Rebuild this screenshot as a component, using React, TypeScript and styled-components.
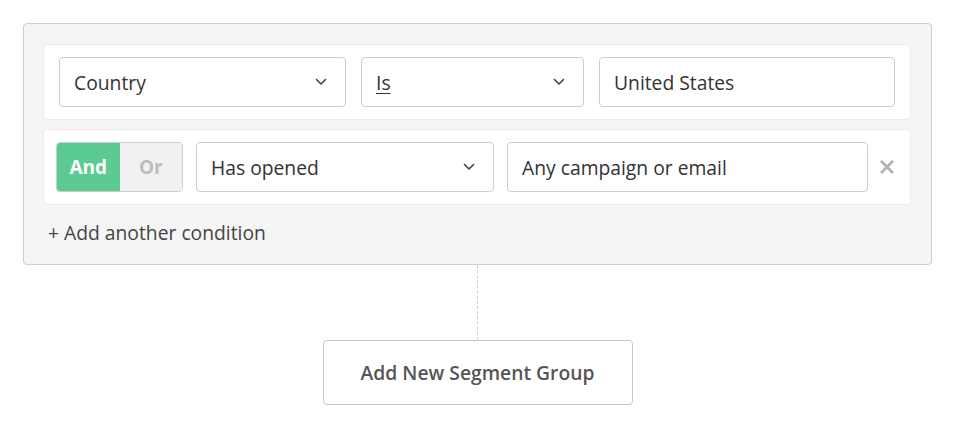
import React from 'react';
import styled, { createGlobalStyle } from 'styled-components';

const GlobalStyle = createGlobalStyle`
    body {
        margin: 0;
        background: #fff;
        font-family: "Open Sans", "Liberation Sans", sans-serif;
        color: #333;
    }
`;

function Chevron() {
    return (
        <svg width="12" height="8" viewBox="0 0 12 8">
            <path d="M1.5 1.5 L6 6 L10.5 1.5" fill="none" stroke="#444" strokeWidth="1.6" strokeLinecap="round" strokeLinejoin="round" />
        </svg>
    );
}

export default function App(): JSX.Element {
    return (
        <Page>
            <GlobalStyle />
            <GroupPanel>
                <ConditionCard $columns="287px 223px 296px" $gap={15} $padLeft={15}>
                    <Select>
                        <span>Country</span>
                        <Chevron />
                    </Select>
                    <Select>
                        <Underlined>Is</Underlined>
                        <Chevron />
                    </Select>
                    <TextInput>United States</TextInput>
                </ConditionCard>
                <ConditionCard $columns="127px 298px 361px 1fr" $gap={13} $padLeft={12}>
                    <Toggle>
                        <ToggleOption $active>And</ToggleOption>
                        <ToggleOption>Or</ToggleOption>
                    </Toggle>
                    <Select>
                        <span>Has opened</span>
                        <Chevron />
                    </Select>
                    <TextInput>Any campaign or email</TextInput>
                    <RemoveButton>
                        <svg width="14" height="14" viewBox="0 0 14 14">
                            <path d="M1.8 1.8 L12.2 12.2 M12.2 1.8 L1.8 12.2" stroke="#b3b3b3" strokeWidth="2.8" strokeLinecap="round" />
                        </svg>
                    </RemoveButton>
                </ConditionCard>
                <AddCondition>+ Add another condition</AddCondition>
            </GroupPanel>
            <Connector />
            <AddGroupButton>Add New Segment Group</AddGroupButton>
        </Page>
    );
}

const Page = styled.div`
    padding: 23px 0 0 23px;
    width: 909px;
    display: flex;
    flex-direction: column;
    align-items: center;
`;

const GroupPanel = styled.div`
    box-sizing: border-box;
    width: 909px;
    padding: 20px 20px 14px 19px;
    background: #f5f5f5;
    border: 1px solid #cfcfcf;
    border-radius: 4px;
    display: flex;
    flex-direction: column;
    gap: 9px;
`;

const ConditionCard = styled.div<{ $columns: string; $gap: number; $padLeft: number }>`
    box-sizing: border-box;
    height: 76px;
    padding: 0 0 0 ${p => p.$padLeft}px;
    background: #fff;
    border: 1px solid #ebebeb;
    border-radius: 4px;
    display: grid;
    grid-template-columns: ${p => p.$columns};
    column-gap: ${p => p.$gap}px;
    align-items: center;
`;

const Select = styled.div`
    box-sizing: border-box;
    height: 50px;
    padding: 0 18px 0 14px;
    background: #fff;
    border: 1px solid #cdcdcd;
    border-radius: 4px;
    display: flex;
    align-items: center;
    justify-content: space-between;
    font-size: 19.3px;
    color: #333;
`;

const Underlined = styled.span`
    text-decoration: underline;
    text-underline-offset: 3px;
`;

const TextInput = styled.div`
    box-sizing: border-box;
    height: 50px;
    padding: 0 14px;
    background: #fff;
    border: 1px solid #cdcdcd;
    border-radius: 4px;
    display: flex;
    align-items: center;
    font-size: 19.3px;
    color: #333;
`;

const Toggle = styled.div`
    box-sizing: border-box;
    height: 50px;
    border: 1px solid #cdcdcd;
    border-radius: 4px;
    overflow: hidden;
    display: grid;
    grid-template-columns: 1fr 1fr;
`;

const ToggleOption = styled.div<{ $active?: boolean }>`
    display: grid;
    place-items: center;
    font-size: 19px;
    font-weight: 700;
    background: ${p => (p.$active ? '#5cca93' : '#f1f1f1')};
    color: ${p => (p.$active ? '#fff' : '#bdbdbd')};
`;

const RemoveButton = styled.div`
    width: 14px;
    justify-self: start;
    margin-left: -1px;
    display: grid;
    place-items: center;
`;

const AddCondition = styled.div`
    height: 36px;
    padding-left: 5px;
    display: flex;
    align-items: center;
    font-size: 19.3px;
    color: #444;
`;

const Connector = styled.div`
    width: 0;
    height: 75px;
    border-left: 1.5px dashed #cfcfcf;
`;

const AddGroupButton = styled.div`
    box-sizing: border-box;
    width: 310px;
    height: 65px;
    border: 1px solid #c8c8c8;
    border-radius: 4px;
    background: #fff;
    display: grid;
    place-items: center;
    font-size: 19.3px;
    font-weight: 600;
    color: #555;
`;
